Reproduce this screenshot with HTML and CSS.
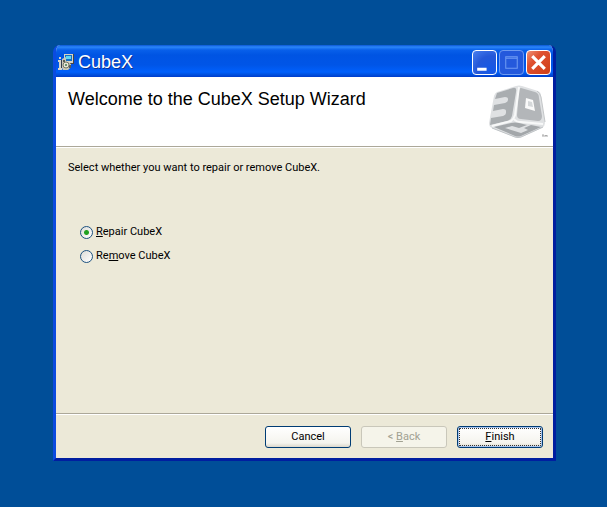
FILE: index.html
```html
<!DOCTYPE html>
<html lang="en">
<head>
<meta charset="utf-8">
<title>CubeX</title>
<link rel="stylesheet" href="styles.css">
</head>
<body>
<main class="window">
  <div class="titlebar">
    <svg class="app-icon" viewBox="0 0 16 16" aria-hidden="true">
      <path d="M6 0h9v9H6z" fill="#d8d4c4"/>
      <path d="M15 0h1v10H9V9h6z" fill="#454545"/>
      <path d="M7 1h7v6H7z" fill="#1470c8"/>
      <path d="M8 2h5v3H8z" fill="#62d8f4"/>
      <path d="M4 5l4-2v4l5 3v3l-3 3H5L4 14z" fill="#c9c8b8"/>
      <path d="M5 6h2v2H5zM11 11h2v3h-2z" fill="#5b5d55"/>
      <circle cx="8" cy="11" r="3" fill="#e9e7d6" stroke="#777768"/>
      <circle cx="8" cy="11" r="1" fill="#417752"/>
      <path d="M0 6h3v8h1v2H0v-2h1V8H0zM1 3h2v2H1z" fill="#d5d5cc"/>
      <path d="M3 6h1v8H3z" fill="#333c50"/>
    </svg>
    <h1 class="caption">CubeX</h1>
    <div class="controls">
      <button class="control" type="button" aria-label="Minimize"><svg viewBox="0 0 22 22"><path d="M4 16h9v3H4z" fill="#fff"/></svg></button>
      <button class="control control-off" type="button" aria-label="Maximize" disabled><svg viewBox="0 0 22 22"><path d="M5.500 5.500h11v11h-11zM5 7h12" fill="none" stroke="#6f9bf3"/></svg></button>
      <button class="control control-close" type="button" aria-label="Close"><svg viewBox="0 0 22 22"><path d="M5 5l12 12M17 5L5 17" fill="none" stroke="#fff" stroke-width="3"/></svg></button>
    </div>
  </div>
  <form class="wizard">
    <header class="banner">
      <h2 class="heading">Welcome to the CubeX Setup Wizard</h2>
      <svg class="logo" viewBox="0 0 60 56" aria-hidden="true">
        <path d="M9 7L28 1Q31 0 34 1L50 6Q53 7 53 11L57 38Q57 41 54 43L34 52Q30 54 26 52L4 43Q1 42 1 38L6 11Q7 8 9 7z" fill="#dfe1e3"/>
        <path d="M9 8L25 3Q29 2 28 7L24 31Q23 35 19 36L2 40L3 33L15 31Q18 30 18 28V26Q18 24 15 24L5 26L6 20L17 18Q20 17 20 15V14Q20 12 17 12L7 14z" fill="#a9adb0"/>
        <path d="M33 3L47 7Q51 8 51 13L54 31Q54 36 50 36L33 34Q29 34 29 30L31 6Q31 3 33 3z" fill="#b3b6b9"/>
        <path d="M38 13L45 15L47 26L37 23z" fill="#fafafa"/>
        <path d="M40 16l4 1 1 5-5-1z" fill="#d5d8da"/>
        <path d="M31 2L27 30Q26 34 23 36L4 41" fill="none" stroke="#f8f9f9" stroke-width="2"/>
        <path d="M26 34Q28 37 33 37L55 39" fill="none" stroke="#f8f9f9" stroke-width="2"/>
        <path d="M6 42L23 38Q27 37 31 38L39 40L31 43L24 41L17 43L33 48L40 45L36 43L43 40L53 42L33 51Q30 52 27 51z" fill="#a3a7aa"/>
        <path d="M4 43L27 52Q30 53 33 52L55 42" fill="none" stroke="#bfc3c6"/>
        <path d="M49 6Q52 8 53 12L57 37" fill="none" stroke="#c3c6c8"/>
        <path d="M54 50h2M55 50v2M57 52v-2l1 1 1-1v2" fill="none" stroke="#aaa"/>
      </svg>
    </header>
    <div class="content">
      <p class="prompt" id="prompt">Select whether you want to repair or remove CubeX.</p>
      <div class="options" role="radiogroup" aria-labelledby="prompt">
        <div class="option"><input class="radio" type="radio" name="action" id="repair" checked><label for="repair"><u>R</u>epair CubeX</label></div>
        <div class="option"><input class="radio" type="radio" name="action" id="remove"><label for="remove">Re<u>m</u>ove CubeX</label></div>
      </div>
    </div>
    <footer class="actions">
      <button class="button" type="button">Cancel</button>
      <button class="button" type="button" disabled>&lt; <u>B</u>ack</button>
      <button class="button button-default" type="submit"><u>F</u>inish</button>
    </footer>
  </form>
</main>
</body>
</html>
```
FILE: styles.css
```css
* {
  box-sizing: border-box;
}

body {
  display: flex;
  min-height: 100vh;
  margin: 0;
  padding: 45px 51px 46px 53px;
  background: #004e98;
  color: #000;
  font: 11px/16px Roboto, "Liberation Sans", sans-serif;
}

h1, h2, p {
  margin: 0;
  font-weight: 400;
}

.window {
  display: flex;
  flex: 1;
  flex-direction: column;
  border: solid;
  border-width: 0 3px 3px;
  border-color: #0831d9 #001ea0 #001ea0 #0b4be0;
  border-radius: 7px 7px 0 0;
  background: #ece9d8;
  overflow: hidden;
}

.titlebar {
  display: flex;
  align-items: center;
  height: 32px;
  margin: 0 -3px;
  padding: 2px 5px 0;
  background: linear-gradient(#0a56d5 0, #2b86f8 2px, #0860ea 5px, #0054e3 10px, #0055e7 20px, #0060fc 27px, #0054e4 29px, #003dcb 32px);
}

.app-icon {
  width: 16px;
  height: 16px;
}

.caption {
  flex: 1;
  margin-left: 4px;
  color: #fff;
  font-family: "Liberation Sans", Arial, sans-serif;
  font-size: 18px;
  line-height: 24px;
  text-shadow: 1px 1px #0a3296;
}

.controls {
  display: flex;
  gap: 2px;
}

.control {
  width: 25px;
  height: 25px;
  padding: 0;
  border: 1px solid #fff;
  border-radius: 4px;
  background: radial-gradient(circle at 80% 85%, #1458e8, #2558d8 55%, #4a80f0);
}

.control svg {
  display: block;
  width: 23px;
  height: 23px;
}

.control-off {
  border-color: #6e9af0;
  background: #2459dc;
}

.control-close {
  background: linear-gradient(135deg, #ee9277, #df5130 35%, #cf3e16);
}

.wizard {
  display: flex;
  flex: 1;
  flex-direction: column;
}

.banner {
  display: flex;
  justify-content: space-between;
  height: 70px;
  padding: 8px 5px 0 12px;
  border-bottom: 1px solid #aca899;
  background: #fff;
}

.heading {
  padding-top: 4px;
  font-family: "Liberation Sans", Arial, sans-serif;
  font-size: 18px;
  line-height: 20px;
}

.logo {
  width: 60px;
  height: 56px;
}

.content {
  flex: 1;
  padding: 12px;
  border-top: 1px solid #fff;
}

.options {
  display: grid;
  gap: 8px;
  padding: 48px 12px 0;
}

.option {
  display: flex;
  align-items: center;
  gap: 3px;
}

.radio {
  width: 13px;
  height: 13px;
  margin: 0;
  border: 1px solid #1c5180;
  border-radius: 50%;
  background: linear-gradient(135deg, #dcdcd7, #fff);
  appearance: none;
}

.radio:checked {
  background: radial-gradient(circle, #21a121 2px, transparent 3px), linear-gradient(135deg, #dcdcd7, #fff);
}

.actions {
  display: flex;
  justify-content: flex-end;
  gap: 10px;
  padding: 12px 10px 10px;
  border-top: 1px solid #aca899;
  box-shadow: inset 0 1px #fff;
}

.button {
  width: 86px;
  height: 22px;
  padding: 0;
  border: 1px solid #003c74;
  border-radius: 3px;
  background: linear-gradient(#fff, #f5f4ee 80%, #dcd7cb);
  color: #000;
  font: inherit;
}

.button:disabled {
  border-color: #c9c7ba;
  background: #f5f4ea;
  color: #a1a192;
}

.button-default {
  box-shadow: inset 0 0 0 1px #a9c4ee;
  outline: 1px dotted #333;
  outline-offset: -3px;
}
```
